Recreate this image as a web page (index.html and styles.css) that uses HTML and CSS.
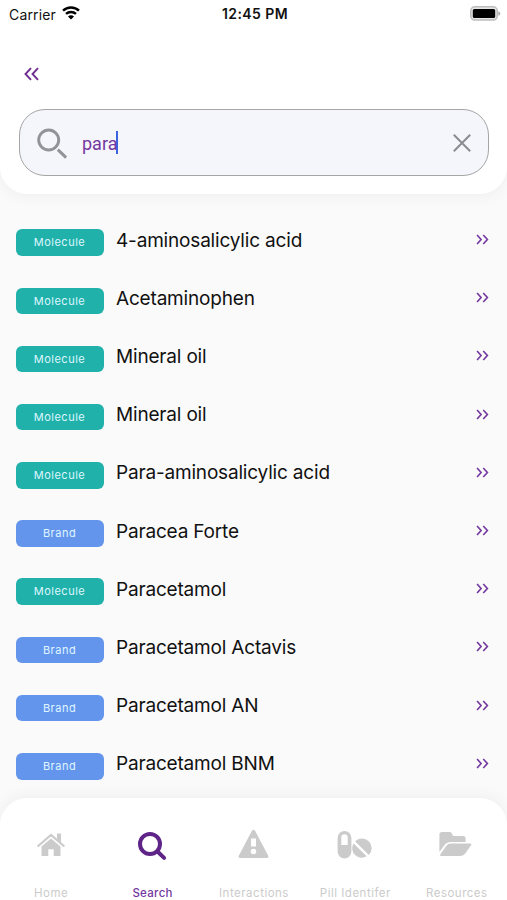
FILE: index.html
```html
<!DOCTYPE html>
<html lang="en">
<head>
<meta charset="utf-8">
<title>Search</title>
<link rel="stylesheet" href="styles.css">
</head>
<body>
<svg width="0" height="0" class="defs"><defs>
<symbol id="next" viewBox="0 0 12 10"><path d="M1 .9 4.700 5 1 9.100M6.700 .9 10.500 5 6.700 9.100"/></symbol>
</defs></svg>
<div class="app">
<header class="header">
<div class="status">
<div class="carrier"><span>Carrier</span>
<svg class="wifi" viewBox="0 0 18 14" width="18" height="14"><path d="M1 4.7C5.4.4 12.6.4 17 4.7M4 7.9c2.8-2.6 7.2-2.6 10 0" fill="none" stroke="#000" stroke-width="2.4"/><path d="M6 10.4c1.7-1.5 4.3-1.5 6 0L9 13.4z"/></svg></div>
<div class="clock">12:45 PM</div>
<svg class="battery" viewBox="0 0 31 15" width="31" height="15"><rect x=".8" y=".8" width="26.4" height="13.2" rx="4" fill="#e6e6e6" stroke="#bdbdbd" stroke-width="1.6"/><rect x="2.8" y="3" width="22.4" height="9" rx="1.6"/><path d="M28.3 5.2c2.6.8 2.6 3.8 0 4.6z" fill="#aaa"/></svg>
</div>
<a class="back"><svg viewBox="0 0 16 14" width="16" height="14"><path d="M7 1.2 1.5 7 7 12.800M14 1.200 8.500 7 14 12.800"/></svg></a>
<div class="search">
<svg class="glass" viewBox="0 0 32 32" width="32" height="32"><circle cx="11.700" cy="13" r="10" stroke-width="2.900"/><path d="m20.800 22.600 8.300 8" stroke-width="3"/></svg>
<span class="query">para</span><span class="caret"></span>
<svg class="clear" viewBox="0 0 18 18" width="18" height="18"><path d="m.8.8 16.400 16.400M17.200.8.8 17.200"/></svg>
</div>
</header>
<main class="list">
<div class="row"><span class="tag molecule">Molecule</span><span class="name">4-aminosalicylic acid</span><svg class="next"><use href="#next"/></svg></div>
<div class="row"><span class="tag molecule">Molecule</span><span class="name">Acetaminophen</span><svg class="next"><use href="#next"/></svg></div>
<div class="row"><span class="tag molecule">Molecule</span><span class="name">Mineral oil</span><svg class="next"><use href="#next"/></svg></div>
<div class="row"><span class="tag molecule">Molecule</span><span class="name">Mineral oil</span><svg class="next"><use href="#next"/></svg></div>
<div class="row"><span class="tag molecule">Molecule</span><span class="name">Para-aminosalicylic acid</span><svg class="next"><use href="#next"/></svg></div>
<div class="row"><span class="tag brand">Brand</span><span class="name">Paracea Forte</span><svg class="next"><use href="#next"/></svg></div>
<div class="row"><span class="tag molecule">Molecule</span><span class="name">Paracetamol</span><svg class="next"><use href="#next"/></svg></div>
<div class="row"><span class="tag brand">Brand</span><span class="name">Paracetamol Actavis</span><svg class="next"><use href="#next"/></svg></div>
<div class="row"><span class="tag brand">Brand</span><span class="name">Paracetamol AN</span><svg class="next"><use href="#next"/></svg></div>
<div class="row"><span class="tag brand">Brand</span><span class="name">Paracetamol BNM</span><svg class="next"><use href="#next"/></svg></div>
</main>
<nav class="nav">
<a class="tab"><svg viewBox="0 0 36 36" width="36" height="36"><path d="M4.600 18.500 18 7 31.400 18.500" fill="none" stroke="currentColor" stroke-width="2.200"/><path d="M24 5.500h4v9l-4-3.500zM8.500 18.500 18 10.500l9.500 8V28h-6.800v-6.800h-5.400V28H8.500z"/></svg><span>Home</span></a>
<a class="tab active"><svg viewBox="0 0 36 36" width="36" height="36"><g fill="none" stroke="currentColor" stroke-width="4"><circle cx="16" cy="16" r="10"/><path d="m23.500 23.500 6.600 6.400" stroke-linecap="round"/></g></svg><span>Search</span></a>
<a class="tab"><svg viewBox="0 0 36 36" width="36" height="36"><path fill-rule="evenodd" d="M16.900 2.700q1.600-2 3.200 0l13.100 25q.9 2.300-1.600 2.300H5.400q-2.500 0-1.600-2.300zM16 10.500v8h5v-8zM18.500 20.700a2.800 2.800 0 1 0 0 5.600 2.800 2.800 0 0 0 0-5.600z"/></svg><span>Interactions</span></a>
<a class="tab"><svg viewBox="0 0 36 36" width="36" height="36"><path fill-rule="evenodd" d="M.6 10a6.900 6.900 0 0 1 13.800 0v13.500a6.900 6.900 0 0 1-13.800 0zM4.300 9.500V17h6.400V9.500a3.200 3.200 0 0 0-6.400 0z"/><path d="M18 13.300 31.800 27A9.400 9.400 0 0 0 18 13.300zM16.600 15.500 29.700 28.300A9.400 9.400 0 0 1 16.600 15.500z"/></svg><span>Pill Identifer</span></a>
<a class="tab"><svg viewBox="0 0 36 36" width="36" height="36"><path d="M1.400 24V6.500Q1.400 4 4 4h8q2 0 2.300 2.500.2 1.500 2 1.500H25q2.600 0 2.600 2.600V14H13q-4.600 0-7 3.700z"/><path d="m2.200 26.500 6-8.500q1.600-2.400 4.800-2.400h19.500q1.700 0 .7 1.500l-6 8.500q-1.700 2.400-4.700 2.400H3.200q-1.600 0-1-1.500z"/></svg><span>Resources</span></a>
</nav>
</div>
</body>
</html>
```

FILE: styles.css
```css
* { box-sizing: border-box; }
body { margin: 0; background: #fafafa; font-family: Inter, "Liberation Sans", sans-serif; color: #111; }
.defs { display: block; }
.app { width: 507px; height: 900px; overflow: hidden; display: flex; flex-direction: column; }
.header { height: 194px; flex: none; background: #fff; border-radius: 0 0 27px 27px; box-shadow: 0 2px 16px rgba(0,0,0,.05); padding: 0 18px 0 19px; }
.status { height: 28px; margin: 0 -12px 0 -10px; display: grid; grid-template-columns: 1fr auto 1fr; align-items: center; }
.carrier { display: flex; align-items: center; gap: 6px; font-size: 14px; letter-spacing: .15px; }
.wifi { margin-top: -3px; }
.clock { font-size: 14px; font-weight: 600; letter-spacing: .4px; margin-top: -1px; }
.battery { justify-self: end; margin-top: -2px; }
.back { display: flex; height: 81px; padding: 39px 0 0 5px; }
.back svg { fill: none; stroke: #6f2c91; stroke-width: 1.900; }
.search { height: 67px; display: flex; align-items: center; background: #f4f6fb; border: 1.500px solid #a5a5a5; border-radius: 26px; padding: 0 17px; }
.glass { fill: none; stroke: #929397; }
.query { margin-left: 13px; padding-top: 2px; font-family: Roboto, sans-serif; font-size: 18px; color: #7438a0; }
.caret { width: 2px; height: 23px; margin-left: -1px; background: #3d62e0; }
.clear { margin-left: auto; fill: none; stroke: #8b8c91; stroke-width: 2; }
.list { flex: 1; min-height: 0; padding: 17px 18px 0 15.500px; }
.row { height: 58.200px; display: flex; align-items: center; }
.tag { width: 88px; height: 26.500px; line-height: 27.500px; margin-top: 5px; border-radius: 6px; text-align: center; color: #dff6ff; font-size: 11px; letter-spacing: .5px; }
.molecule { background: #20b2aa; }
.brand { background: #6495ed; }
.name { margin: 1px 0 0 12.500px; flex: 1; font-size: 19px; letter-spacing: -.18px; line-height: 24px; }
.next { width: 13px; height: 11px; margin-top: -1px; fill: none; stroke: #7438a0; stroke-width: 1.500; }
.nav { height: 102px; flex: none; background: #fff; border-radius: 27px 27px 0 0; box-shadow: 0 -2px 16px rgba(0,0,0,.05); display: grid; grid-template-columns: repeat(5, 1fr); }
.tab { display: flex; flex-direction: column; align-items: center; padding-top: 30px; color: #cbcbcb; font-size: 11.500px; line-height: 16px; letter-spacing: .5px; }
.tab svg { fill: currentColor; }
.tab span { margin-top: 21px; padding-left: 1px; white-space: nowrap; }
.active { color: #5f2487; }
.active span { color: #7438a0; font-weight: 500; letter-spacing: .3px; }
```
